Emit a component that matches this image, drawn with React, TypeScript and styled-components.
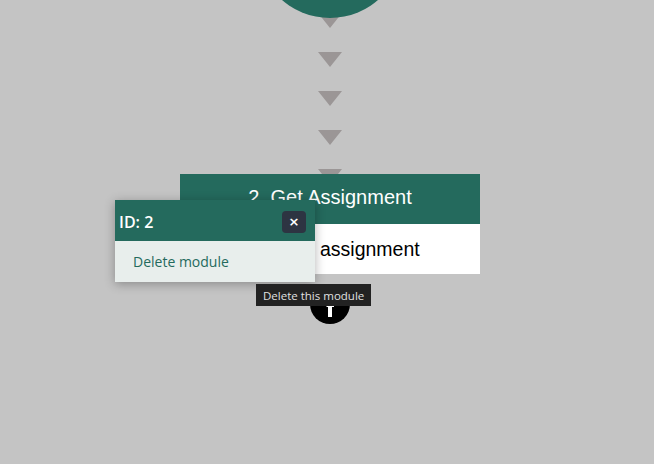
import styled, { createGlobalStyle } from "styled-components";

const GlobalStyle = createGlobalStyle`
  html, body {
    margin: 0;
    padding: 0;
    background: #c4c4c4;
    overflow: hidden;
  }
  body {
    font-family: "Liberation Sans", Arial, sans-serif;
  }
`;

const Canvas = styled.div`
  position: relative;
  width: 654px;
  height: 464px;
  overflow: hidden;
`;

const Flow = styled.div`
  display: flex;
  flex-direction: column;
  align-items: center;
  padding-left: 6px;
`;

const StartNode = styled.div`
  width: 146px;
  height: 146px;
  margin-top: -128px;
  border-radius: 50%;
  background: #246a5d;
  position: relative;
  z-index: 2;
`;

const Connector = styled.div`
  display: flex;
  flex-direction: column;
  align-items: center;
  gap: 24px;
  margin-top: -5px;
  position: relative;
  z-index: 1;
`;

const Arrow = styled.div`
  width: 0;
  height: 0;
  border-left: 12.5px solid transparent;
  border-right: 12.5px solid transparent;
  border-top: 15px solid #9b9696;
`;

const Card = styled.div`
  width: 300px;
  margin-top: -10px;
  position: relative;
  z-index: 3;
  display: flex;
  flex-direction: column;
`;

const CardHead = styled.div`
  box-sizing: border-box;
  height: 50px;
  padding-bottom: 3px;
  background: #246a5d;
  color: #fff;
  font-size: 20px;
  display: flex;
  align-items: center;
  justify-content: center;
`;

const CardBody = styled.div`
  height: 50px;
  background: #fff;
  color: #000;
  font-size: 19.5px;
  display: flex;
  align-items: center;
  padding-left: 140px;
`;

const AddButton = styled.button`
  margin-top: 10px;
  width: 40px;
  height: 40px;
  border-radius: 50%;
  border: none;
  padding: 0;
  background: #000;
  display: flex;
  align-items: center;
  justify-content: center;
  position: relative;
  z-index: 3;
`;

const Popup = styled.div`
  position: absolute;
  left: 115px;
  top: 200px;
  width: 200px;
  z-index: 10;
  box-shadow: 0 2px 10px rgba(0, 0, 0, 0.3);
  font-family: "Open Sans", "Noto Sans", sans-serif;
`;

const PopupHead = styled.div`
  box-sizing: border-box;
  height: 41px;
  background: #246a5d;
  color: #fff;
  display: flex;
  align-items: center;
  justify-content: space-between;
  padding: 3px 9px 0 4px;
  font-size: 16px;
  font-weight: 600;
`;

const CloseBtn = styled.button`
  width: 24px;
  height: 22px;
  border: none;
  border-radius: 4px;
  background: #2d3442;
  color: #fff;
  font-size: 13px;
  font-weight: 700;
  line-height: 22px;
  padding: 0;
  font-family: "DejaVu Sans", sans-serif;
`;

const PopupBody = styled.div`
  height: 41px;
  background: #e8eeec;
  display: flex;
  align-items: center;
  padding-left: 18px;
`;

const MenuItem = styled.span`
  color: #246a5d;
  font-size: 14px;
`;

const Tooltip = styled.div`
  position: absolute;
  left: 256px;
  top: 284px;
  height: 22px;
  padding: 0 7px;
  background: #222;
  color: #e0e0e0;
  font-family: "Open Sans", "Noto Sans", sans-serif;
  font-size: 11.5px;
  display: flex;
  align-items: center;
  z-index: 11;
`;

export default function App() {
  return (
    <Canvas>
      <GlobalStyle />
      <Flow>
        <StartNode />
        <Connector>
          <Arrow />
          <Arrow />
          <Arrow />
          <Arrow />
          <Arrow />
        </Connector>
        <Card>
          <CardHead>2. Get Assignment</CardHead>
          <CardBody>assignment</CardBody>
        </Card>
        <AddButton>
          <svg width="40" height="40" viewBox="0 0 40 40">
            <rect x="18" y="7" width="4" height="26" fill="#fff" />
            <rect x="7" y="18" width="26" height="4" fill="#fff" />
            <rect x="16.5" y="21" width="7.5" height="2" fill="#fff" />
          </svg>
        </AddButton>
      </Flow>
      <Popup>
        <PopupHead>
          <span>ID: 2</span>
          <CloseBtn>×</CloseBtn>
        </PopupHead>
        <PopupBody>
          <MenuItem>Delete module</MenuItem>
        </PopupBody>
      </Popup>
      <Tooltip>Delete this module</Tooltip>
    </Canvas>
  );
}
